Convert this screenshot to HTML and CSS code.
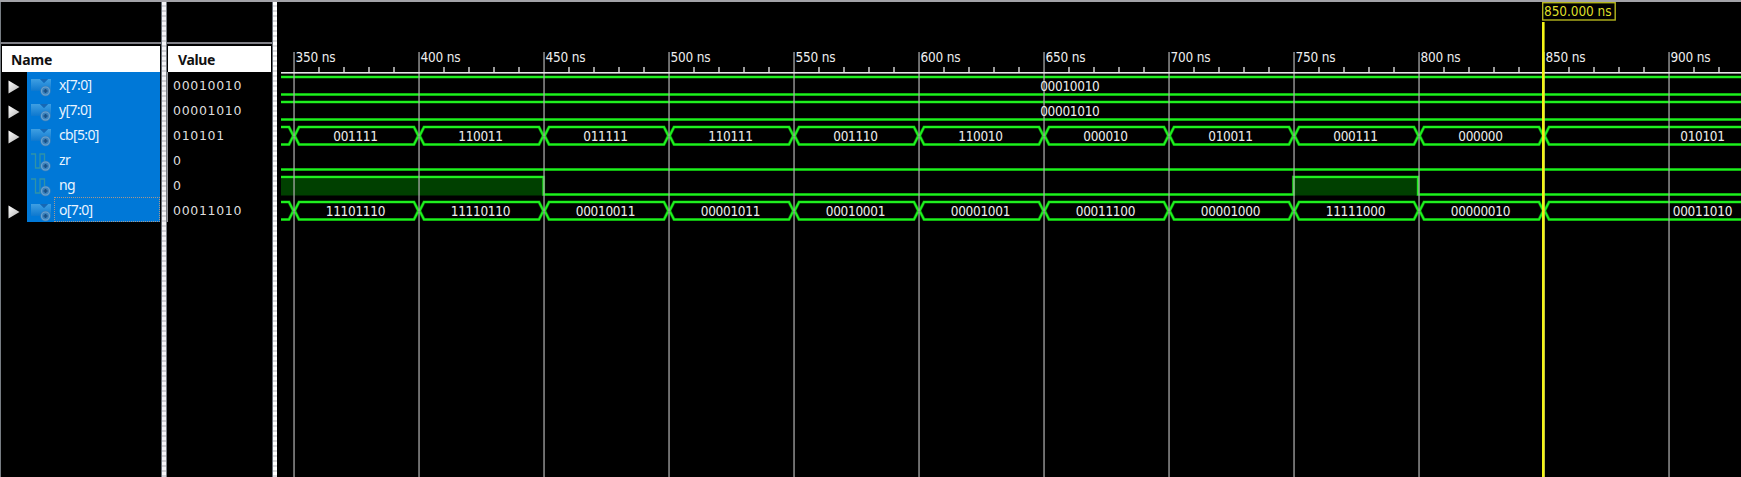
FILE: index.html
```
<!DOCTYPE html>
<html lang="en">
<head>
<meta charset="utf-8">
<title>Waveform</title>
<link rel="stylesheet" href="styles.css">
</head>
<body>
<svg class="defs" width="0" height="0">
  <defs>
    <linearGradient id="sky" x1="0" y1="0" x2="0" y2="1"><stop offset="0" stop-color="#3f9fe2"/><stop offset="1" stop-color="#0d78cf"/></linearGradient>
    <linearGradient id="arrow" x1="0" y1="0" x2="1" y2="1"><stop offset="0" stop-color="#ffffff"/><stop offset="1" stop-color="#b0b0b0"/></linearGradient>
    <symbol id="gear" viewBox="0 0 22 20">
      <circle cx="15.5" cy="14" r="5.2" fill="#3a82bd"/>
      <circle cx="15.5" cy="14" r="4" fill="none" stroke="#6fa3cf" stroke-width="1.2"/>
      <path d="M15.5 12v4M13.5 14h4" stroke="#184f85" stroke-width="1.7"/>
    </symbol>
    <symbol id="bus" viewBox="0 0 22 20">
      <path d="M1 2h9l4 4 4-4h3v12h-4l-4-3-3 3H1z" fill="url(#sky)"/>
      <path d="M10 2l4 4 4-4z" fill="#1768b4"/>
      <use href="#gear"/>
    </symbol>
    <symbol id="bit" viewBox="0 0 22 20">
      <path d="M1 2h4.500v14h4.500V2h4.500v8" fill="none" stroke="#2f93a8" stroke-width="1.300"/>
      <use href="#gear"/>
    </symbol>
    <symbol id="expand" viewBox="0 0 12 14"><path d="M0.500 0.500L11.500 7L0.500 13.500z" fill="url(#arrow)"/></symbol>
  </defs>
</svg>
<main class="viewer">
  <section class="panel names">
    <div class="spacer"></div>
    <div class="head">Name</div>
    <ul class="rows">
      <li><span class="tree"><svg><use href="#expand"/></svg></span><span class="sig"><svg><use href="#bus"/></svg><b>x[7:0]</b></span></li>
      <li><span class="tree"><svg><use href="#expand"/></svg></span><span class="sig"><svg><use href="#bus"/></svg><b>y[7:0]</b></span></li>
      <li><span class="tree"><svg><use href="#expand"/></svg></span><span class="sig"><svg><use href="#bus"/></svg><b>cb[5:0]</b></span></li>
      <li><span class="tree"></span><span class="sig"><svg><use href="#bit"/></svg><b>zr</b></span></li>
      <li><span class="tree"></span><span class="sig"><svg><use href="#bit"/></svg><b>ng</b></span></li>
      <li><span class="tree"><svg><use href="#expand"/></svg></span><span class="sig"><svg><use href="#bus"/></svg><b class="focus">o[7:0]</b></span></li>
    </ul>
  </section>
  <div class="split"></div>
  <section class="panel values">
    <div class="spacer"></div>
    <div class="head">Value</div>
    <ul class="rows">
      <li>00010010</li><li>00001010</li><li>010101</li><li>0</li><li>0</li><li>00011010</li>
    </ul>
  </section>
  <div class="split wide"></div>
  <section class="waves"><svg id="plot" width="1464" height="475" viewBox="277 2 1464 475"></svg></section>
</main>
<script src="waves.js"></script>
</body>
</html>
```
FILE: styles.css
```
body { margin: 0; background: #000; overflow: hidden; }
.defs { position: absolute; }
.viewer { display: flex; box-sizing: border-box; height: 477px; border-top: 2px solid #a3a3a8; font-family: "Noto Sans", sans-serif; color: #fff; }
.panel { box-sizing: border-box; border-left: 1px solid #777d83; border-right: 1px solid #666d76; flex: none; }
.names { width: 162px; }
.values { width: 107px; }
.spacer { box-sizing: border-box; height: 42px; border-bottom: 2px solid #808087; }
.head { height: 26px; margin: 2px 1px 0; padding-left: 9px; background: #fff; color: #111; font-size: 14px; font-weight: 700; line-height: 27px; letter-spacing: -0.1px; }
.rows { list-style: none; margin: 0 1px; padding: 0; }
.rows li { display: flex; height: 25px; }
.tree { width: 25px; display: flex; align-items: center; padding-top: 4px; box-sizing: border-box; }
.tree svg { width: 12px; height: 14px; margin-left: 6px; }
.sig { flex: 1; background: #0078d7; display: flex; align-items: center; }
.sig svg { width: 22px; height: 20px; margin: 4px 0 0 3px; }
.sig b { flex: 1; height: 25px; margin-left: 2px; padding-left: 4px; border: 1px solid transparent; font-size: 14px; font-weight: 400; line-height: 24px; letter-spacing: -0.65px; color: #e8f4ff; box-sizing: border-box; }
.sig .focus { border: 1px dotted #a8988c; }
.values .head { padding-left: 10px; letter-spacing: -0.4px; }
.values .rows { border-left: 1px solid #96969b; margin-left: 0; }
.values li { padding-left: 5px; color: #dedede; font: 12.5px/27px "DejaVu Sans", sans-serif; letter-spacing: 0.68px; }
.split { width: 4px; flex: none; background: repeating-linear-gradient(#f4f4f7 0 3px, #d0d0d5 3px 5px); }
.wide { background: repeating-linear-gradient(#fff 0 3px, #dddde0 3px 5px); }
.waves { flex: none; }
.waves svg { display: block; }
.waves text { font: 13.5px "DejaVu Sans Condensed", "DejaVu Sans", sans-serif; fill: #eee; }
.waves .flag { fill: #dfdf28; }
```
FILE: waves.js
```
const plot = document.getElementById("plot");
const NS = "http://www.w3.org/2000/svg";
const START = 281, END = 1743, FIRST = 294, STEP = 125;

function add(tag, attrs, text) {
  const el = document.createElementNS(NS, tag);
  for (const key in attrs) el.setAttribute(key, attrs[key]);
  if (text) el.textContent = text;
  plot.appendChild(el);
}
function trace(d) {
  add("path", { d, fill: "none", stroke: "#007800", "stroke-width": 3.2 });
  add("path", { d, fill: "none", stroke: "#20f020", "stroke-width": 1.9 });
}
function label(cx, y, text) {
  const w = text.length * 7.45;
  add("text", { x: cx - w / 2, y, textLength: w }, text);
}

// High regions of ng
for (const [a, b] of [[START, 543.5], [1293.500, 1418]])
  add("rect", { x: a, y: 177, width: b - a, height: 18.5, fill: "#004000" });

// Constant buses
for (const y of [77, 94.5, 102, 119.5, 169.5]) trace(`M${START} ${y}H${END}`);
trace(`M${START} 177H543.5V194.5H1293.5V177H1418V194.5H${END}`);

// Changing buses
const buses = [
  [127, ["001111", "110011", "011111", "110111", "001110", "110010", "000010", "010011", "000111", "000000"], "010101"],
  [202, ["11101110", "11110110", "00010011", "00001011", "00010001", "00001001", "00011100", "00001000", "11111000", "00000010"], "00011010"]
];
for (const [top] of buses) {
  const bottom = top + 17.5;
  let upper = `M${START} ${top}`, lower = `M${START} ${bottom}`;
  for (let i = 0; i <= 10; i++) {
    const x = FIRST + STEP * i;
    upper += `H${x - 5}L${x - 1} ${top + 8}V${top + 9.5}M${x + 1} ${top + 9.5}V${top + 8}L${x + 5} ${top}`;
    lower += `H${x - 5}L${x - 1} ${bottom - 8}M${x + 1} ${bottom - 8}L${x + 5} ${bottom}`;
  }
  trace(upper + `H${END}`);
  trace(lower + `H${END}`);
}

// Ruler and grid
for (let i = 0; i <= 11; i++) {
  const x = FIRST + STEP * i;
  add("rect", { x: x - 0.8, y: 52, width: 1.700, height: 425, fill: "#aaaaaa", opacity: 0.75 });
  for (let k = 1; k < 5; k++)
    add("rect", { x: x + 25 * k - 0.9, y: 67, width: 1.8, height: 6, fill: "#aaa" });
  add("text", { x: x + 1.500, y: 62, textLength: 40 }, `${350 + 50 * i} ns`);
}
add("rect", { x: START, y: 72, width: END - START, height: 1.6, fill: "#e6e6e6" });

label(1070, 91, "00010010");
label(1070, 116, "00001010");
for (const [top, values, last] of buses) {
  values.forEach((v, i) => label(FIRST + STEP * i + 61.6, top + 14, v));
  label(1702.6, top + 14, last);
}

// Time cursor
add("rect", { x: 1542, y: 22, width: 2.6, height: 455, fill: "#f4f416" });
add("rect", { x: 1542.7, y: 2.7, width: 72.5, height: 17.300, fill: "#000", stroke: "#b5b51d", "stroke-width": 1.4 });
add("text", { x: 1544, y: 16, textLength: 67.5, class: "flag" }, "850.000 ns");
```
